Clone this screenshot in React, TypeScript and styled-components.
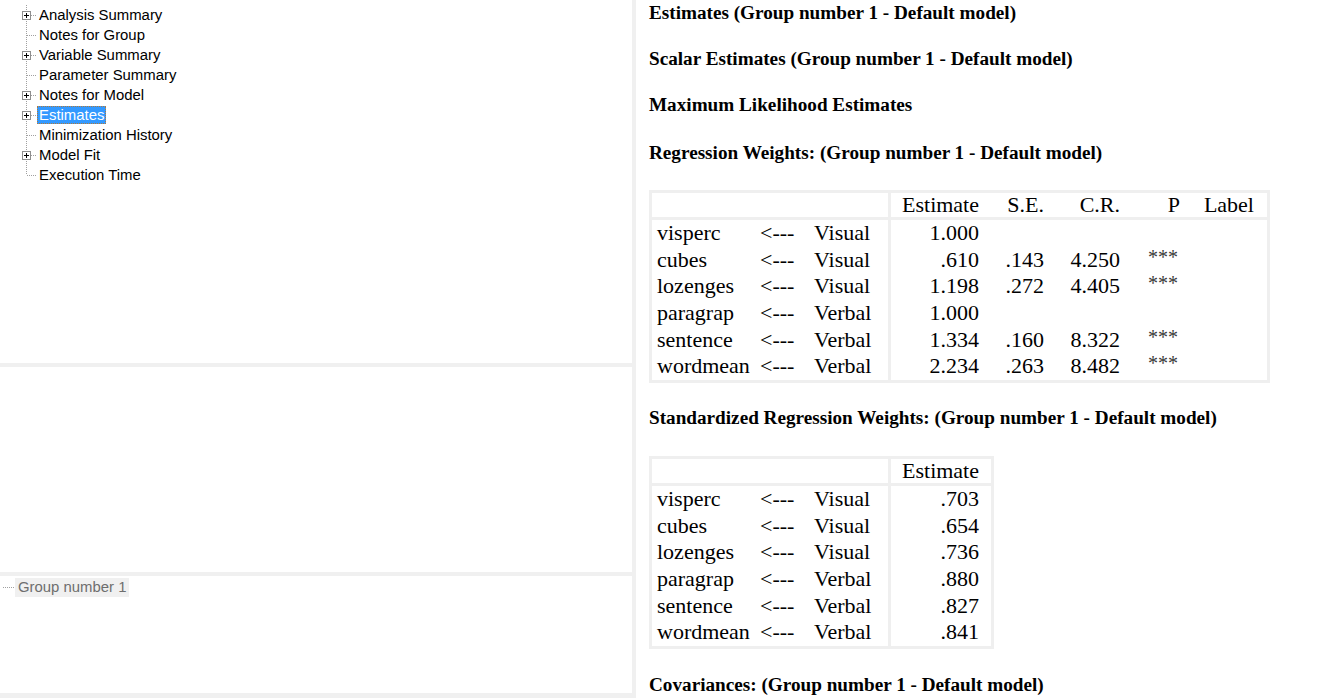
import React from 'react';
import styled, { createGlobalStyle } from 'styled-components';

const GlobalStyle = createGlobalStyle`
  html, body {
    margin: 0;
    padding: 0;
    background: #ffffff;
    overflow: hidden;
  }
`;

const Window = styled.div`
  display: flex;
  width: 1334px;
  height: 698px;
  background: #ffffff;
`;

const LeftPane = styled.div`
  display: flex;
  flex-direction: column;
  width: 632px;
  flex-shrink: 0;
`;

const Splitter = styled.div<{ $vertical?: boolean; $size: number }>`
  flex-shrink: 0;
  background: #f0f0f0;
  ${({ $vertical, $size }) => ($vertical ? `width: ${$size}px;` : `height: ${$size}px;`)}
`;

const Pane = styled.div<{ $height: number; $padTop?: number }>`
  height: ${({ $height }) => $height}px;
  padding-top: ${({ $padTop }) => $padTop ?? 0}px;
  box-sizing: border-box;
  overflow: hidden;
  background: #ffffff;
`;

const TreeList = styled.ul`
  list-style: none;
  margin: 0;
  padding: 0;
  font-family: 'Liberation Sans', Arial, sans-serif;
  font-size: 14.9px;
  color: #000000;
`;

const TreeRow = styled.li`
  display: flex;
  align-items: center;
  height: 20px;
`;

const TreeLabel = styled.span<{ $selected?: boolean; $inactive?: boolean }>`
  display: inline-block;
  line-height: 18px;
  padding: 0 2px;
  white-space: nowrap;
  box-sizing: border-box;
  ${({ $selected }) =>
    $selected &&
    `
    background: #3399ff;
    color: #ffffff;
    outline: 1px dotted #b07a3a;
    outline-offset: -1px;
  `}
  ${({ $inactive }) =>
    $inactive &&
    `
    background: #f0f0f0;
    color: #6e6e6e;
    padding: 0 3px;
    line-height: 19px;
  `}
`;

const RightPane = styled.div`
  flex: 1;
  padding: 2px 0 0 13px;
  overflow: hidden;
  font-family: 'Liberation Serif', 'Times New Roman', serif;
  color: #000000;
`;

const Heading = styled.h4<{ $after?: number }>`
  margin: 0 0 ${({ $after }) => $after ?? 24}px;
  font-size: 19.2px;
  line-height: 22px;
  font-weight: bold;
  white-space: nowrap;
`;

const Grid = styled.div<{ $cols: string; $after?: number }>`
  display: grid;
  grid-template-columns: ${({ $cols }) => $cols};
  width: max-content;
  border: 3px solid #efefef;
  margin-bottom: ${({ $after }) => $after ?? 24}px;
  font-size: 22px;
`;

const Cell = styled.div<{
  $head?: boolean;
  $right?: boolean;
  $pad?: number;
  $divider?: boolean;
  $span?: number;
}>`
  box-sizing: border-box;
  white-space: nowrap;
  height: ${({ $head }) => ($head ? '27px' : '26.67px')};
  line-height: ${({ $head }) => ($head ? '23px' : '26.67px')};
  text-align: ${({ $right }) => ($right ? 'right' : 'left')};
  ${({ $right, $pad }) => ($right ? `padding-right: ${$pad ?? 6}px;` : `padding-left: ${$pad ?? 5}px;`)}
  ${({ $head }) => $head && 'border-bottom: 3px solid #efefef;'}
  ${({ $divider }) => $divider && 'border-left: 3px solid #efefef;'}
  ${({ $span }) => $span && `grid-column: span ${$span};`}
`;

const Stars = styled.span`
  font-size: 20px;
  color: #3a3a3a;
  position: relative;
  top: -3px;
`;

const TreeGlyph: React.FC<{ expandable?: boolean; last?: boolean }> = ({ expandable, last }) => (
  <svg width="37" height="20" viewBox="0 0 37 20" style={{ flexShrink: 0 }}>
    <line x1="26.5" y1="0" x2="26.5" y2={last ? 10 : 20} stroke="#a0a0a0" strokeDasharray="1 1" />
    <line x1={expandable ? 31 : 27} y1="10.5" x2="37" y2="10.5" stroke="#a0a0a0" strokeDasharray="1 1" />
    {expandable && (
      <>
        <rect x="22.5" y="6.5" width="8" height="8" fill="#ffffff" stroke="#8f8f8f" />
        <line x1="24" y1="10.5" x2="29" y2="10.5" stroke="#000000" />
        <line x1="26.5" y1="8" x2="26.5" y2="13" stroke="#000000" />
      </>
    )}
  </svg>
);

const GroupGlyph: React.FC = () => (
  <svg width="15" height="20" viewBox="0 0 15 20" style={{ flexShrink: 0 }}>
    <line x1="3" y1="10.5" x2="15" y2="10.5" stroke="#a0a0a0" strokeDasharray="1 1" />
  </svg>
);

const treeItems = [
  { label: 'Analysis Summary', expandable: true },
  { label: 'Notes for Group' },
  { label: 'Variable Summary', expandable: true },
  { label: 'Parameter Summary' },
  { label: 'Notes for Model', expandable: true },
  { label: 'Estimates', expandable: true, selected: true },
  { label: 'Minimization History' },
  { label: 'Model Fit', expandable: true },
  { label: 'Execution Time' },
];

type Row = [string, string, string, string[]];

const regression: Row[] = [
  ['visperc', '<---', 'Visual', ['1.000', '', '', '', '']],
  ['cubes', '<---', 'Visual', ['.610', '.143', '4.250', '***', '']],
  ['lozenges', '<---', 'Visual', ['1.198', '.272', '4.405', '***', '']],
  ['paragrap', '<---', 'Verbal', ['1.000', '', '', '', '']],
  ['sentence', '<---', 'Verbal', ['1.334', '.160', '8.322', '***', '']],
  ['wordmean', '<---', 'Verbal', ['2.234', '.263', '8.482', '***', '']],
];

const standardized: Row[] = [
  ['visperc', '<---', 'Visual', ['.703']],
  ['cubes', '<---', 'Visual', ['.654']],
  ['lozenges', '<---', 'Visual', ['.736']],
  ['paragrap', '<---', 'Verbal', ['.880']],
  ['sentence', '<---', 'Verbal', ['.827']],
  ['wordmean', '<---', 'Verbal', ['.841']],
];

const valuePads = [12, 7, 6, 6, 13];
const valueWidths = ['103px', '60px', '75px', '60px', '81px'];

const EstimateTable: React.FC<{ headers: string[]; rows: Row[]; after?: number }> = ({ headers, rows, after }) => (
  <Grid $cols={['102px', '54px', '80px', ...valueWidths.slice(0, headers.length)].join(' ')} $after={after}>
    <Cell $head $span={3} />
    {headers.map((h, i) => (
      <Cell key={h} $head $right $pad={valuePads[i]} $divider={i === 0}>
        {h}
      </Cell>
    ))}
    {rows.map(([dep, arrow, factor, values]) => (
      <React.Fragment key={dep}>
        <Cell $pad={5}>{dep}</Cell>
        <Cell $pad={6}>{arrow}</Cell>
        <Cell $pad={6}>{factor}</Cell>
        {values.map((v, i) => (
          <Cell key={i} $right $pad={i === 3 ? 8 : valuePads[i]} $divider={i === 0}>
            {v === '***' ? <Stars>***</Stars> : v}
          </Cell>
        ))}
      </React.Fragment>
    ))}
  </Grid>
);

const App: React.FC = () => (
  <>
    <GlobalStyle />
    <Window>
      <LeftPane>
        <Pane $height={363} $padTop={5}>
          <TreeList>
            {treeItems.map((item, i) => (
              <TreeRow key={item.label}>
                <TreeGlyph expandable={item.expandable} last={i === treeItems.length - 1} />
                <TreeLabel $selected={item.selected}>{item.label}</TreeLabel>
              </TreeRow>
            ))}
          </TreeList>
        </Pane>
        <Splitter $size={4} />
        <Pane $height={205} />
        <Splitter $size={4} />
        <Pane $height={117} $padTop={1}>
          <TreeList>
            <TreeRow>
              <GroupGlyph />
              <TreeLabel $inactive>Group number 1</TreeLabel>
            </TreeRow>
          </TreeList>
        </Pane>
        <Splitter $size={5} />
      </LeftPane>
      <Splitter $vertical $size={4} />
      <RightPane>
        <Heading>Estimates (Group number 1 - Default model)</Heading>
        <Heading>Scalar Estimates (Group number 1 - Default model)</Heading>
        <Heading $after={26}>Maximum Likelihood Estimates</Heading>
        <Heading $after={26}>Regression Weights: (Group number 1 - Default model)</Heading>
        <EstimateTable headers={['Estimate', 'S.E.', 'C.R.', 'P', 'Label']} rows={regression} />
        <Heading $after={27}>Standardized Regression Weights: (Group number 1 - Default model)</Heading>
        <EstimateTable headers={['Estimate']} rows={standardized} after={25} />
        <Heading>Covariances: (Group number 1 - Default model)</Heading>
      </RightPane>
    </Window>
  </>
);

export default App;
